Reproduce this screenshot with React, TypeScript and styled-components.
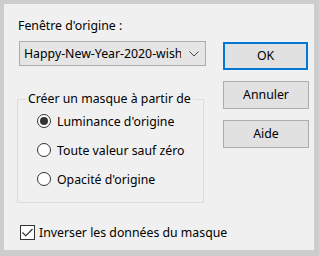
import React from "react";
import styled, { createGlobalStyle } from "styled-components";

const Global = createGlobalStyle`
  html, body { margin: 0; padding: 0; background: #cdcdcd; }
  body { font-family: "Noto Sans", "Segoe UI", sans-serif; font-size: 12.3px; color: #000; }
  * { box-sizing: border-box; }
`;

const Frame = styled.div`
  width: 319px;
  height: 256px;
  padding: 4px 5px 6px 4px;
  background: #cdcdcd;
`;

const Panel = styled.div`
  width: 310px;
  height: 246px;
  background: #f0f0f0;
  display: flex;
  flex-direction: row;
`;

const LeftCol = styled.div`
  width: 219px;
  display: flex;
  flex-direction: column;
  padding-left: 13px;
`;

const RightCol = styled.div`
  width: 86px;
  display: flex;
  flex-direction: column;
  padding-top: 38px;
  gap: 11px;
`;

const Label = styled.div`
  margin-top: 14px;
  margin-left: 1px;
  line-height: 16px;
  height: 16px;
  white-space: nowrap;
`;

const Combo = styled.div`
  margin-top: 7px;
  margin-left: 2px;
  width: 187px;
  height: 25px;
  background: #e5e5e5;
  border: 1px solid #adadad;
  display: flex;
  align-items: center;
  padding-left: 4px;
  overflow: hidden;
`;

const ComboText = styled.span`
  flex: 1;
  white-space: nowrap;
  overflow: hidden;
  line-height: 16px;
`;

const Chevron = styled.svg`
  flex: none;
  margin: 0 6px 0 8px;
`;

const Group = styled.fieldset`
  margin: 26px 0 0 0;
  width: 187px;
  height: 111px;
  border: 1px solid #dcdcdc;
  padding: 8px 0 0 19px;
  display: flex;
  flex-direction: column;
  gap: 15px;
  min-width: 0;
`;

const Legend = styled.legend`
  padding: 0 2px;
  margin-left: -11px;
  line-height: 14px;
  white-space: nowrap;
`;

const RadioRow = styled.div`
  display: flex;
  align-items: center;
  height: 14px;
  gap: 6px;
  white-space: nowrap;
`;

const RadioCircle = styled.span<{ $on?: boolean }>`
  flex: none;
  width: 14px;
  height: 14px;
  border-radius: 50%;
  border: 1px solid #333;
  background: #fff;
  display: flex;
  align-items: center;
  justify-content: center;
  &::after {
    content: "";
    display: ${(p) => (p.$on ? "block" : "none")};
    width: 8px;
    height: 8px;
    border-radius: 50%;
    background: #333;
  }
`;

const CheckRow = styled.div`
  margin-top: 22px;
  margin-left: 3px;
  display: flex;
  align-items: center;
  gap: 4px;
  white-space: nowrap;
  height: 15px;
`;

const CheckBox = styled.span`
  flex: none;
  width: 15px;
  height: 15px;
  border: 1px solid #333;
  background: #fff;
  display: flex;
  align-items: center;
  justify-content: center;
`;

const Button = styled.div<{ $default?: boolean }>`
  height: 28px;
  width: ${(p) => (p.$default ? "85px" : "86px")};
  background: #e1e1e1;
  border: ${(p) => (p.$default ? "2px solid #0078d7" : "1px solid #adadad")};
  display: flex;
  align-items: center;
  justify-content: center;
  line-height: 16px;
`;

export default function App() {
  return (
    <>
      <Global />
      <Frame>
        <Panel>
          <LeftCol>
            <Label>Fenêtre d'origine :</Label>
            <Combo>
              <ComboText>Happy-New-Year-2020-wishes</ComboText>
              <Chevron width="10" height="6" viewBox="0 0 10 6">
                <path d="M0.5 0.5 L5 5 L9.5 0.5" fill="none" stroke="#444" strokeWidth="1" />
              </Chevron>
            </Combo>
            <Group>
              <Legend>Créer un masque à partir de</Legend>
              <RadioRow>
                <RadioCircle $on />
                Luminance d'origine
              </RadioRow>
              <RadioRow>
                <RadioCircle />
                Toute valeur sauf zéro
              </RadioRow>
              <RadioRow>
                <RadioCircle />
                Opacité d'origine
              </RadioRow>
            </Group>
            <CheckRow>
              <CheckBox>
                <svg width="11" height="9" viewBox="0 0 11 9">
                  <path d="M0.5 4.5 L3.8 7.8 L10.5 1" fill="none" stroke="#222" strokeWidth="1.1" />
                </svg>
              </CheckBox>
              Inverser les données du masque
            </CheckRow>
          </LeftCol>
          <RightCol>
            <Button $default>OK</Button>
            <Button>Annuler</Button>
            <Button>Aide</Button>
          </RightCol>
        </Panel>
      </Frame>
    </>
  );
}
